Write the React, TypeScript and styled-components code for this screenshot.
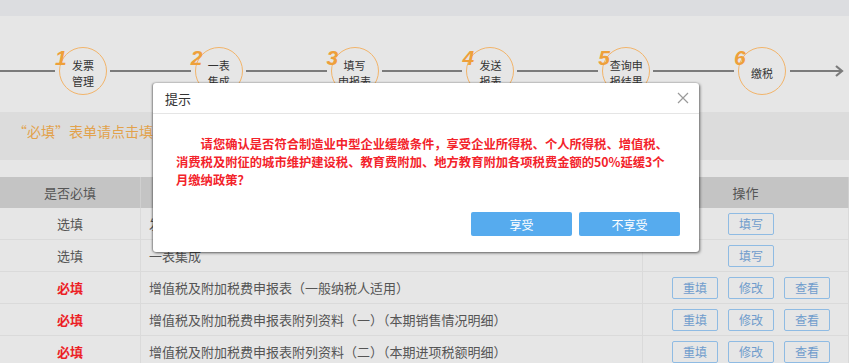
import React from 'react'
import styled, { createGlobalStyle } from 'styled-components'

const GlobalStyle = createGlobalStyle`
  html, body {
    margin: 0;
    padding: 0;
    background: #e6e6e6;
  }
  body {
    font-family: "Noto Sans CJK SC", "Noto Sans", sans-serif;
    color: #555;
    overflow: hidden;
  }
`

const Page = styled.div`
  position: relative;
  width: 849px;
  height: 363px;
  overflow: hidden;
  background: #e6e6e6;
`

const TopStrip = styled.div`
  height: 16px;
  background: #dcdde0;
`

const StepBar = styled.div`
  display: flex;
  align-items: center;
  height: 96px;
  padding: 14px 5px 0 0;
  box-sizing: border-box;
`

const Line = styled.div<{ $w?: number }>`
  height: 2px;
  background: #7b7b7b;
  flex: ${p => (p.$w ? `0 0 ${p.$w}px` : '1 1 0')};
`

const ArrowLine = styled.div`
  flex: 0 0 55px;
  display: flex;
  align-items: center;
  height: 14px;
  svg {
    display: block;
  }
`

const Step = styled.div`
  position: relative;
  flex: 0 0 55px;
  height: 48px;
`

const Circle = styled.div`
  position: absolute;
  left: 4px;
  top: 0;
  width: 48px;
  height: 48px;
  box-sizing: border-box;
  border: 1.5px solid #f2b46a;
  border-radius: 50%;
  display: flex;
  align-items: center;
  justify-content: center;
  text-align: center;
  font-size: 11px;
  line-height: 16px;
  color: #333;
  padding-top: 3px;
`

const StepNum = styled.span`
  position: absolute;
  left: 0;
  top: 1px;
  font-family: "Liberation Sans", Arial, sans-serif;
  font-style: italic;
  font-weight: bold;
  font-size: 21px;
  line-height: 20px;
  color: #eea03a;
`

const Notice = styled.div`
  height: 48px;
  background: #dcdcdc;
  padding: 9px 0 0 13px;
  box-sizing: border-box;
  font-size: 14px;
  color: #e2a24c;
  white-space: nowrap;
`

const Spacer = styled.div`
  height: 17px;
`

const Table = styled.table`
  width: 100%;
  border-collapse: collapse;
  table-layout: fixed;
  font-size: 13px;
`

const Th = styled.th<{ $w?: number }>`
  width: ${p => (p.$w ? `${p.$w}px` : 'auto')};
  height: 31px;
  background: #c4c4c4;
  color: #555;
  font-weight: normal;
  text-align: center;
  padding: 0;
  border-right: 1px solid #d0d0d0;
`

const Td = styled.td<{ $align?: string }>`
  height: 31px;
  padding: 0 ${p => (p.$align === 'left' ? '8px' : '0')};
  text-align: ${p => p.$align || 'center'};
  border-bottom: 1px solid #dadada;
  border-right: 1px solid #dadada;
  color: #555;
  white-space: nowrap;
  overflow: hidden;
`

const Need = styled.span<{ $must?: boolean }>`
  color: ${p => (p.$must ? '#ec1f27' : '#555')};
  font-weight: ${p => (p.$must ? 'bold' : 'normal')};
`

const Ops = styled.div`
  display: grid;
  grid-template-columns: repeat(3, 46px);
  column-gap: 10px;
  padding-left: 29px;
  align-items: center;
`

const OpBtn = styled.button<{ $col: number }>`
  grid-column: ${p => p.$col};
  height: 22px;
  padding: 0;
  background: transparent;
  border: 1px solid #8fbbe3;
  border-radius: 2px;
  color: #6f9ccc;
  font-family: inherit;
  font-size: 12px;
  line-height: 20px;
`

const Dialog = styled.div`
  position: absolute;
  left: 153px;
  top: 83px;
  width: 546px;
  height: 169px;
  background: #fff;
  border-radius: 3px;
  box-shadow: 1px 1px 3px rgba(0, 0, 0, 0.55), -1px 0 2px rgba(0, 0, 0, 0.35);
  display: flex;
  flex-direction: column;
`

const DialogHead = styled.div`
  height: 30px;
  display: flex;
  align-items: center;
  justify-content: space-between;
  padding: 0 10px 0 12px;
  border-bottom: 1px solid #e5e5e5;
  font-size: 13px;
  color: #333;
`

const Close = styled.span`
  display: flex;
  svg {
    display: block;
  }
`

const DialogText = styled.p`
  margin: 21px 0 0 23px;
  width: 496px;
  font-size: 12.3px;
  line-height: 18px;
  font-weight: bold;
  color: #f3232b;
  text-indent: 2em;
`

const DialogFoot = styled.div`
  margin-top: auto;
  display: flex;
  justify-content: flex-end;
  gap: 7px;
  padding: 0 19px 16px 0;
`

const MainBtn = styled.button`
  width: 101px;
  height: 24px;
  border: none;
  border-radius: 2px;
  background: #56abee;
  color: #fff;
  font-family: inherit;
  font-size: 12px;
  padding: 0;
`

const steps = [
  ['发票', '管理'],
  ['一表', '集成'],
  ['填写', '申报表'],
  ['发送', '报表'],
  ['查询申', '报结果'],
  ['缴税'],
]

const rows = [
  { must: false, name: '发票管理', ops: ['填写'] },
  { must: false, name: '一表集成', ops: ['填写'] },
  { must: true, name: '增值税及附加税费申报表（一般纳税人适用）', ops: ['重填', '修改', '查看'] },
  { must: true, name: '增值税及附加税费申报表附列资料（一）（本期销售情况明细）', ops: ['重填', '修改', '查看'] },
  { must: true, name: '增值税及附加税费申报表附列资料（二）（本期进项税额明细）', ops: ['重填', '修改', '查看'] },
]

function App() {
  return (
    <Page>
      <GlobalStyle />
      <TopStrip />
      <StepBar>
        <Line $w={55} />
        {steps.map((s, i) => (
          <React.Fragment key={i}>
            {i > 0 && <Line />}
            <Step>
              <Circle>
                <div>
                  {s.map(t => (
                    <div key={t}>{t}</div>
                  ))}
                </div>
              </Circle>
              <StepNum>{i + 1}</StepNum>
            </Step>
          </React.Fragment>
        ))}
        <ArrowLine>
          <svg width="55" height="14" viewBox="0 0 55 14">
            <line x1="1" y1="7" x2="53" y2="7" stroke="#7b7b7b" strokeWidth="2" />
            <polyline points="47,2 53,7 47,12" fill="none" stroke="#7b7b7b" strokeWidth="2.2" />
          </svg>
        </ArrowLine>
      </StepBar>
      <Notice>“必填”表单请点击填写后再进行申报</Notice>
      <Spacer />
      <Table>
        <thead>
          <tr>
            <Th $w={140}>是否必填</Th>
            <Th />
            <Th $w={205}>操作</Th>
          </tr>
        </thead>
        <tbody>
          {rows.map(r => (
            <tr key={r.name}>
              <Td>
                <Need $must={r.must}>{r.must ? '必填' : '选填'}</Need>
              </Td>
              <Td $align="left">{r.name}</Td>
              <Td>
                <Ops>
                  {r.ops.map((o, j) => (
                    <OpBtn key={o} $col={r.ops.length === 1 ? 2 : j + 1}>
                      {o}
                    </OpBtn>
                  ))}
                </Ops>
              </Td>
            </tr>
          ))}
        </tbody>
      </Table>

      <Dialog>
        <DialogHead>
          <span>提示</span>
          <Close>
            <svg width="12" height="12" viewBox="0 0 12 12">
              <path d="M1 1 L11 11 M11 1 L1 11" stroke="#9a9a9a" strokeWidth="1.2" />
            </svg>
          </Close>
        </DialogHead>
        <DialogText>
          请您确认是否符合制造业中型企业缓缴条件，享受企业所得税、个人所得税、增值税、消费税及附征的城市维护建设税、教育费附加、地方教育附加各项税费金额的50%延缓3个月缴纳政策？
        </DialogText>
        <DialogFoot>
          <MainBtn>享受</MainBtn>
          <MainBtn>不享受</MainBtn>
        </DialogFoot>
      </Dialog>
    </Page>
  )
}

export default App
